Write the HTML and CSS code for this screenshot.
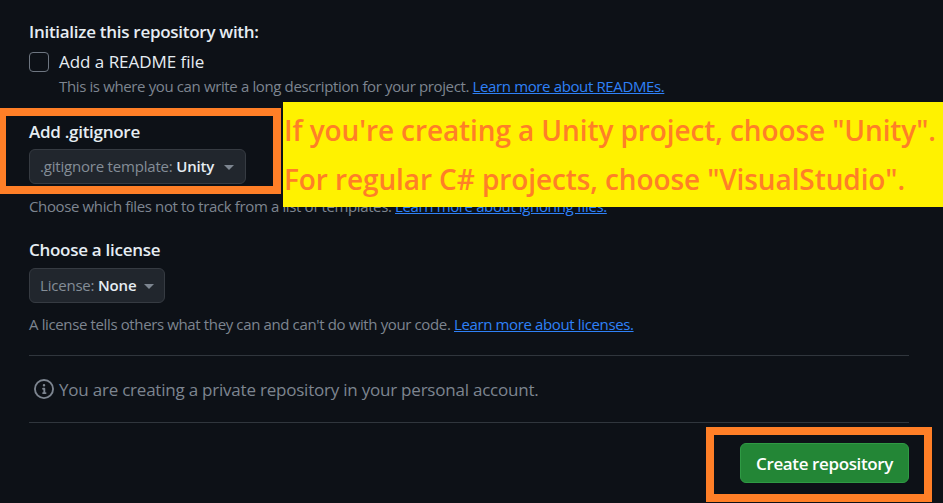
FILE: index.html
```html
<!DOCTYPE html>
<html lang="en">
<head>
    <meta charset="UTF-8">
    <title>Create repository</title>
    <link rel="stylesheet" href="styles.css">
</head>
<body>
    <main class="form">
        <h3 class="title init-title">Initialize this repository with:</h3>
        <div class="check-row">
            <span class="checkbox"></span>
            <span class="check-label">Add a README file</span>
        </div>
        <p class="note readme-note">This is where you can write a long description for your project. <a href="#">Learn more about READMEs.</a></p>

        <h3 class="title ignore-title">Add .gitignore</h3>
        <button class="select ignore-select">.gitignore template: <b>Unity</b><i class="caret"></i></button>
        <p class="note ignore-note">Choose which files not to track from a list of templates. <a href="#">Learn more about ignoring files.</a></p>

        <h3 class="title license-title">Choose a license</h3>
        <button class="select license-select">License: <b>None</b><i class="caret"></i></button>
        <p class="note license-note">A license tells others what they can and can't do with your code. <a href="#">Learn more about licenses.</a></p>

        <hr class="line first-line">
        <div class="info">
            <svg class="info-icon" width="20" height="20" viewBox="0 0 16 16" fill="currentColor"><path d="M0 8a8 8 0 1 1 16 0A8 8 0 0 1 0 8Zm8-6.5a6.5 6.5 0 1 0 0 13 6.5 6.5 0 0 0 0-13ZM6.5 7.75A.75.75 0 0 1 7.25 7h1a.75.75 0 0 1 .75.75v2.75h.25a.75.75 0 0 1 0 1.5h-2a.75.75 0 0 1 0-1.5h.25v-2h-.25a.75.75 0 0 1-.75-.75ZM8 6a1 1 0 1 1 0-2 1 1 0 0 1 0 2Z"></path></svg>
            <span>You are creating a private repository in your personal account.</span>
        </div>
        <hr class="line second-line">
        <div class="actions">
            <button class="create">Create repository</button>
        </div>
    </main>

    <!-- annotations drawn on top of the screenshot -->
    <div class="mark mark-ignore"></div>
    <div class="mark mark-create"></div>
    <div class="callout">
        <p>If you're creating a Unity project, choose "Unity".</p>
        <p>For regular C# projects, choose "VisualStudio".</p>
    </div>
</body>
</html>
```

FILE: styles.css
```css
html, body {
    margin: 0;
    height: 503px;
    overflow: hidden;
}
body {
    position: relative;
    background-color: #0d1117;
    color: #e6edf3;
    font-family: "Open Sans", "Noto Sans", sans-serif;
}
.form {
    width: 880px;
    padding-left: 29px;
}
.title {
    margin: 0;
    font-size: 17px;
    line-height: 20px;
    font-weight: 600;
    letter-spacing: -0.28px;
}
.init-title { padding-top: 22px; }
.ignore-title { margin-top: 26px; }
.license-title { margin-top: 24px; }

.check-row {
    display: flex;
    align-items: center;
    gap: 10px;
    margin-top: 9px;
}
.checkbox {
    width: 18px;
    height: 18px;
    border: 1px solid #6e7681;
    border-radius: 4px;
}
.check-label {
    padding-top: 1px;
    font-size: 17px;
    line-height: 20px;
    letter-spacing: -0.03px;
}

.note {
    margin: 0;
    font-size: 15px;
    line-height: 20px;
    color: #7d8590;
    letter-spacing: -0.37px;
}
.note a { color: #2f81f7; }
.readme-note { margin-top: 4px; padding-left: 30px; }
.ignore-note { margin-top: 12px; }
.license-note { margin-top: 11px; }

.select {
    display: flex;
    align-items: center;
    height: 35px;
    margin-top: 7px;
    padding: 0 11px 2px 10px;
    box-sizing: border-box;
    background-color: #21262d;
    border: 1px solid #363b42;
    border-radius: 6px;
    color: #848d97;
    font-family: inherit;
    font-size: 15px;
    letter-spacing: -0.2px;
    white-space: pre;
}
.select b {
    color: #e6edf3;
    font-weight: 600;
}
.ignore-select { width: 217px; }
.license-select { width: 136px; margin-top: 8px; padding-right: 10px; }
.caret {
    margin-left: auto;
    margin-top: 4px;
    width: 0;
    height: 0;
    border-left: 5px solid transparent;
    border-right: 5px solid transparent;
    border-top: 5px solid #7d8590;
}

.line {
    height: 1px;
    margin: 0;
    border: 0;
    background-color: #30363d;
}
.first-line { margin-top: 21px; }
.second-line { margin-top: 23px; }

.info {
    display: flex;
    align-items: center;
    gap: 5px;
    height: 20px;
    margin-top: 23px;
    padding-left: 5px;
    color: #7d8590;
    font-size: 17px;
    letter-spacing: -0.22px;
}
.info-icon { flex-shrink: 0; }

.actions {
    display: flex;
    justify-content: flex-end;
    margin-top: 20px;
}
.create {
    width: 169px;
    height: 40px;
    padding-top: 2px;
    background-color: #238636;
    border: 1px solid #2f9a44;
    border-radius: 6px;
    color: #ffffff;
    font-family: inherit;
    font-size: 17px;
    font-weight: 600;
    letter-spacing: -0.38px;
}

.mark {
    position: absolute;
    box-sizing: border-box;
    border: 8px solid #ff7f27;
}
.mark-ignore {
    left: -2px;
    top: 108px;
    width: 283px;
    height: 86px;
}
.mark-create {
    left: 706px;
    top: 427px;
    width: 226px;
    height: 75px;
}
.callout {
    position: absolute;
    left: 283px;
    top: 102px;
    width: 660px;
    height: 105px;
    padding-top: 4px;
    box-sizing: border-box;
    background-color: #fff200;
    color: #ff7f27;
    font-size: 28px;
    font-weight: 600;
}
.callout p {
    margin: 0;
    padding-left: 1px;
    line-height: 49px;
    letter-spacing: -0.1px;
    white-space: nowrap;
}
```
